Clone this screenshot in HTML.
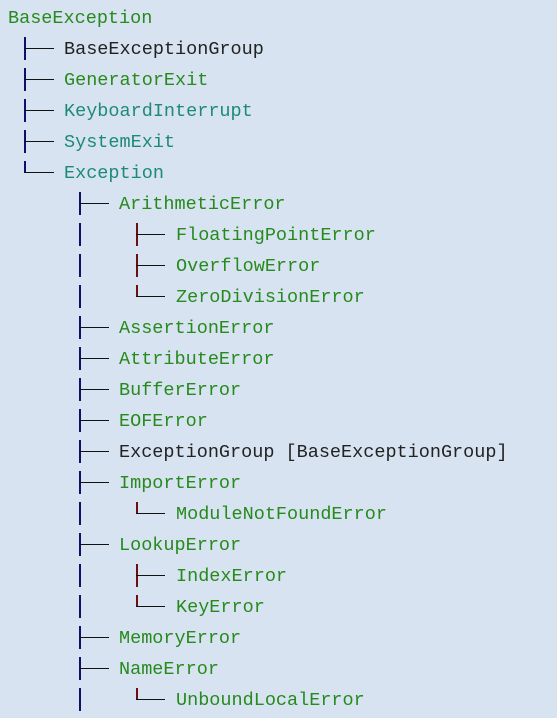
<!DOCTYPE html><html><head><style>
body{margin:0;width:557px;height:718px;background:#d7e3f1;overflow:hidden;position:relative;font-family:"Liberation Mono",monospace;font-size:18.5px}
.t{position:absolute;line-height:20px;white-space:pre}
.g{color:#268a1c}.c{color:#1d8a78}.d{color:#222}
.v{position:absolute;width:2px;background:#10106a}
.r{background:#6a1010}
.h{position:absolute;height:1px;background:#111}
</style></head><body>
<script>
const rows=[
[0,'BaseException','g',''],
[1,'BaseExceptionGroup','d','T'],
[1,'GeneratorExit','g','T'],
[1,'KeyboardInterrupt','c','T'],
[1,'SystemExit','c','T'],
[1,'Exception','c','L'],
[2,'ArithmeticError','g','T'],
[3,'FloatingPointError','g','T',1],
[3,'OverflowError','g','T',1],
[3,'ZeroDivisionError','g','L',1],
[2,'AssertionError','g','T'],
[2,'AttributeError','g','T'],
[2,'BufferError','g','T'],
[2,'EOFError','g','T'],
[2,'ExceptionGroup [BaseExceptionGroup]','d','T'],
[2,'ImportError','g','T'],
[3,'ModuleNotFoundError','g','L',1],
[2,'LookupError','g','T'],
[3,'IndexError','g','T',1],
[3,'KeyError','g','L',1],
[2,'MemoryError','g','T'],
[2,'NameError','g','T'],
[3,'UnboundLocalError','g','L',1]];
const tx=[8,64,119,176],lx=[0,24,79,136];
let h='';
rows.forEach((r,i)=>{const cy=17+31*i;
h+=`<div class="t ${r[2]}" style="left:${tx[r[0]]}px;top:${cy-8}px">${r[1]}</div>`;
if(r[0]>0){const x=lx[r[0]];const red=r[0]==3?' r':'';
h+=`<div class="v${red}" style="left:${x}px;top:${cy-11}px;height:${r[3]=='T'?23:12}px"></div>`;
h+=`<div class="h" style="left:${x}px;top:${cy}px;width:${r[0]==3?29:30}px"></div>`;}
if(r[4])h+=`<div class="v" style="left:79px;top:${cy-11}px;height:23px"></div>`;
});
document.write(h);
</script>
</body></html>
